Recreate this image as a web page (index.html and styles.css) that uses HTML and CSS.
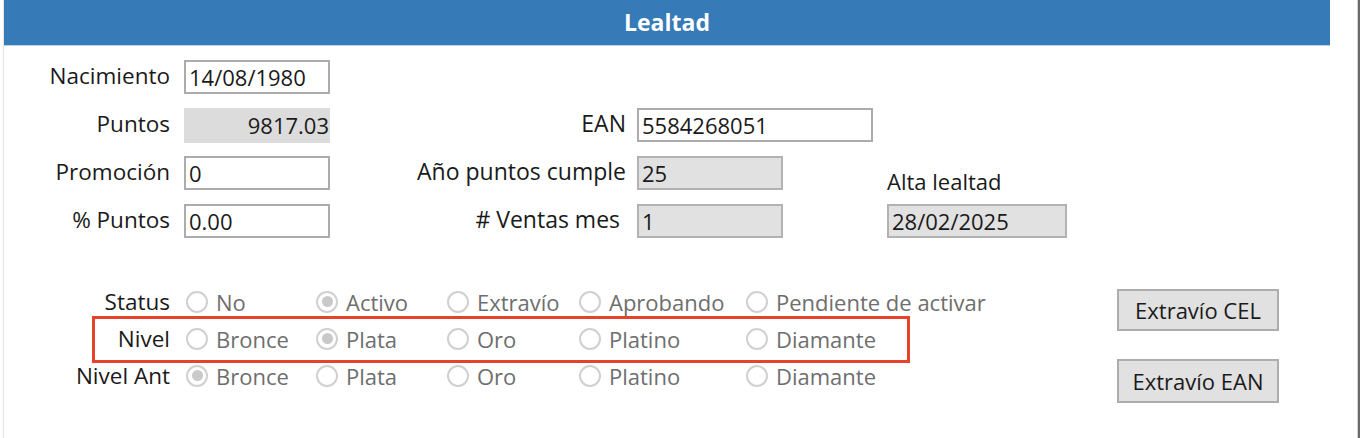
FILE: index.html
```html
<!DOCTYPE html>
<html lang="es">
<head>
    <meta charset="UTF-8">
    <meta name="viewport" content="width=device-width, initial-scale=1.0">
    <title>Lealtad</title>
    <link rel="stylesheet" href="styles.css">
</head>
<body>
    <div class="window">
        <div class="content">
            <div class="section-title">Lealtad</div>

            <div class="fields">
                <label class="label">Nacimiento</label>
                <input class="field" type="text" value="14/08/1980">
                <div></div>
                <div></div>
                <div></div>

                <label class="label">Puntos</label>
                <div class="value">9817.03</div>
                <label class="label label-mid">EAN</label>
                <input class="field field-wide" type="text" value="5584268051">
                <div></div>

                <label class="label">Promoción</label>
                <input class="field" type="text" value="0">
                <label class="label label-mid">Año puntos cumple</label>
                <input class="field readonly" type="text" value="25" readonly>
                <label class="label-top">Alta lealtad</label>

                <label class="label">% Puntos</label>
                <input class="field" type="text" value="0.00">
                <label class="label label-mid">#&nbsp;Ventas mes&nbsp;</label>
                <input class="field readonly" type="text" value="1" readonly>
                <input class="field readonly field-date" type="text" value="28/02/2025" readonly>
            </div>

            <div class="choices">
                <div class="options">
                    <div class="option-row">
                        <span class="label">Status</span>
                        <label class="option"><input type="radio" name="status" disabled>No</label>
                        <label class="option"><input type="radio" name="status" checked disabled>Activo</label>
                        <label class="option"><input type="radio" name="status" disabled>Extravío</label>
                        <label class="option"><input type="radio" name="status" disabled>Aprobando</label>
                        <label class="option"><input type="radio" name="status" disabled>Pendiente de activar</label>
                    </div>
                    <div class="option-row marked">
                        <span class="label">Nivel</span>
                        <label class="option"><input type="radio" name="nivel" disabled>Bronce</label>
                        <label class="option"><input type="radio" name="nivel" checked disabled>Plata</label>
                        <label class="option"><input type="radio" name="nivel" disabled>Oro</label>
                        <label class="option"><input type="radio" name="nivel" disabled>Platino</label>
                        <label class="option"><input type="radio" name="nivel" disabled>Diamante</label>
                    </div>
                    <div class="option-row">
                        <span class="label">Nivel Ant</span>
                        <label class="option"><input type="radio" name="nivel-ant" checked disabled>Bronce</label>
                        <label class="option"><input type="radio" name="nivel-ant" disabled>Plata</label>
                        <label class="option"><input type="radio" name="nivel-ant" disabled>Oro</label>
                        <label class="option"><input type="radio" name="nivel-ant" disabled>Platino</label>
                        <label class="option"><input type="radio" name="nivel-ant" disabled>Diamante</label>
                    </div>
                </div>
                <div class="actions">
                    <button class="btn">Extravío CEL</button>
                    <button class="btn btn-tall">Extravío EAN</button>
                </div>
            </div>
        </div>
        <div class="edge"></div>
    </div>
</body>
</html>
```

FILE: styles.css
```css
* {
    margin: 0;
    padding: 0;
    box-sizing: border-box;
}

body {
    font-family: 'Open Sans', 'Noto Sans', sans-serif;
    font-size: 22px;
    color: #1a1a1a;
    background: #fff;
    overflow: hidden;
}

.window {
    display: flex;
    height: 438px;
}

.content {
    flex: 1;
    margin-left: 3px;
    border-left: 1px solid #e4e4e4;
}

.edge {
    width: 3px;
    background: #d2d2d2;
    border-left: 1px solid #d2d2d2;
    border-right: 2px solid #6a6a6a;
}

.section-title {
    height: 46px;
    margin-right: 27px;
    background: #367ab7;
    border-bottom: 1px solid #b9d3ea;
    color: #fff;
    font-weight: bold;
    font-size: 23px;
    text-align: center;
    line-height: 44px;
}

/* top block of data fields */
.fields {
    display: grid;
    grid-template-columns: 180px 146px 307px 250px 180px;
    grid-auto-rows: 48px;
    align-items: center;
    margin-top: 7px;
}

.fields .label {
    padding-bottom: 4px;
}

.label {
    text-align: right;
    padding-right: 14px;
    white-space: nowrap;
    font-size: 22.5px;
}

.label-mid {
    padding-right: 11px;
    font-size: 23px;
}

.label-top {
    align-self: end;
    font-size: 22px;
    line-height: 32px;
}

.field {
    width: 146px;
    height: 34px;
    border: 2px solid #acacac;
    background: #fff;
    font-family: inherit;
    font-size: 22px;
    color: #1a1a1a;
    padding: 0 3px;
    outline: none;
}

.field-wide {
    width: 236px;
}

.field-date {
    width: 180px;
}

.readonly {
    background: #e1e1e1;
    border-color: #b2b2b2;
}

.value {
    height: 35px;
    background: #dcdcdc;
    text-align: right;
    line-height: 35px;
    padding-right: 1px;
}

/* radio groups and side buttons */
.choices {
    display: flex;
    margin-top: 38px;
}

.options {
    width: 1113px;
}

.option-row {
    display: grid;
    grid-template-columns: 182px 130px 131px 132px 167px auto;
    height: 37px;
    align-items: center;
}

.option-row .label {
    padding-right: 16px;
}

.marked {
    position: relative;
}

.marked::after {
    content: '';
    position: absolute;
    left: 88px;
    top: -4px;
    width: 812px;
    height: 41px;
    border: 3px solid #e6432a;
}

.option {
    display: flex;
    align-items: center;
    gap: 8px;
    color: #6e6e6e;
    white-space: nowrap;
}

.option input {
    appearance: none;
    flex: none;
    width: 22px;
    height: 22px;
    margin: 0;
    border: 2px solid #d0d0d0;
    border-radius: 50%;
    background: #fff;
    display: grid;
    place-content: center;
}

.option input:checked::before {
    content: '';
    display: block;
    width: 11px;
    height: 11px;
    border-radius: 50%;
    background: #c9c9c9;
}

.actions {
    display: flex;
    flex-direction: column;
    gap: 28px;
    padding-top: 6px;
}

.btn {
    width: 162px;
    height: 42px;
    background: #e1e1e1;
    border: 2px solid #adadad;
    font-family: inherit;
    font-size: 22px;
    color: #1a1a1a;
}

.btn-tall {
    height: 44px;
}
```
